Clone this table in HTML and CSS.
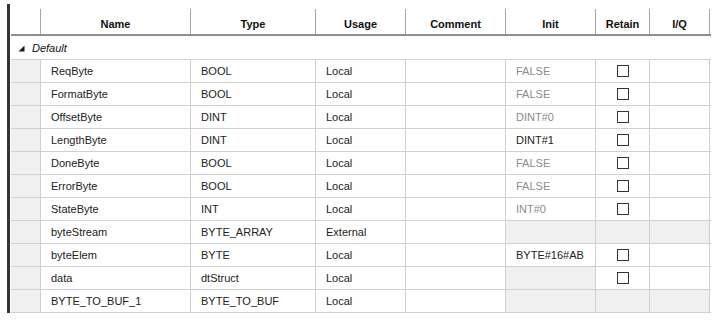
FILE: index.html
```html
<!DOCTYPE html>
<html>
<head>
<meta charset="utf-8">
<link rel="stylesheet" href="styles.css">
</head>
<body>
<div class="frame">
  <div class="grid">
    <div class="row head">
      <div class="c h"></div>
      <div class="c h">Name</div>
      <div class="c h">Type</div>
      <div class="c h">Usage</div>
      <div class="c h">Comment</div>
      <div class="c h">Init</div>
      <div class="c h">Retain</div>
      <div class="c h">I/Q</div>
    </div>
    <div class="group">
      <svg class="tri" width="7" height="7" viewBox="0 0 7 7"><polygon points="6.5,0.5 6.5,6.5 0.5,6.5" fill="#1a1a1a"/></svg>
      <span>Default</span>
    </div>
    <div class="row"><div class="c g"></div><div class="c">ReqByte</div><div class="c">BOOL</div><div class="c">Local</div><div class="c"></div><div class="c dim">FALSE</div><div class="c cb"><span class="box"></span></div><div class="c"></div></div>
    <div class="row"><div class="c g"></div><div class="c">FormatByte</div><div class="c">BOOL</div><div class="c">Local</div><div class="c"></div><div class="c dim">FALSE</div><div class="c cb"><span class="box"></span></div><div class="c"></div></div>
    <div class="row"><div class="c g"></div><div class="c">OffsetByte</div><div class="c">DINT</div><div class="c">Local</div><div class="c"></div><div class="c dim">DINT#0</div><div class="c cb"><span class="box"></span></div><div class="c"></div></div>
    <div class="row"><div class="c g"></div><div class="c">LengthByte</div><div class="c">DINT</div><div class="c">Local</div><div class="c"></div><div class="c">DINT#1</div><div class="c cb"><span class="box"></span></div><div class="c"></div></div>
    <div class="row"><div class="c g"></div><div class="c">DoneByte</div><div class="c">BOOL</div><div class="c">Local</div><div class="c"></div><div class="c dim">FALSE</div><div class="c cb"><span class="box"></span></div><div class="c"></div></div>
    <div class="row"><div class="c g"></div><div class="c">ErrorByte</div><div class="c">BOOL</div><div class="c">Local</div><div class="c"></div><div class="c dim">FALSE</div><div class="c cb"><span class="box"></span></div><div class="c"></div></div>
    <div class="row"><div class="c g"></div><div class="c">StateByte</div><div class="c">INT</div><div class="c">Local</div><div class="c"></div><div class="c dim">INT#0</div><div class="c cb"><span class="box"></span></div><div class="c"></div></div>
    <div class="row"><div class="c g"></div><div class="c">byteStream</div><div class="c">BYTE_ARRAY</div><div class="c">External</div><div class="c"></div><div class="c g"></div><div class="c g"></div><div class="c g"></div></div>
    <div class="row"><div class="c g"></div><div class="c">byteElem</div><div class="c">BYTE</div><div class="c">Local</div><div class="c"></div><div class="c">BYTE#16#AB</div><div class="c cb"><span class="box"></span></div><div class="c"></div></div>
    <div class="row"><div class="c g"></div><div class="c">data</div><div class="c">dtStruct</div><div class="c">Local</div><div class="c"></div><div class="c g"></div><div class="c cb"><span class="box"></span></div><div class="c"></div></div>
    <div class="row"><div class="c g"></div><div class="c">BYTE_TO_BUF_1</div><div class="c">BYTE_TO_BUF</div><div class="c">Local</div><div class="c"></div><div class="c g"></div><div class="c g"></div><div class="c g"></div></div>
  </div>
</div>
</body>
</html>
```

FILE: styles.css
```css
* { box-sizing: border-box; }
html, body { margin: 0; padding: 0; background: #fff; }
body {
  font-family: "Liberation Sans", Arial, sans-serif;
  font-size: 11px;
  color: #222;
  width: 721px;
  height: 320px;
  overflow: hidden;
}
.frame {
  margin: 4px 0 0 7px;
  width: 704px;
  height: 309px;
  border-left: 3px solid #333;
  padding-left: 1px;
}
.grid { width: 700px; }
.row {
  display: grid;
  grid-template-columns: 30px 150px 125px 90px 100px 90px 54px 60px;
  border-bottom: 1px solid #d0d0d0;
  height: 23px;
}
.c {
  border-right: 1px solid #d0d0d0;
  padding-left: 10px;
  display: flex;
  align-items: center;
  white-space: nowrap;
  line-height: 13px;
}
.row.head {
  height: 32px;
  padding-top: 5px;
  border-bottom: 2px solid #8f8f8f;
}
.c.h {
  border-right-color: #a6a6a6;
  justify-content: center;
  align-items: flex-end;
  padding: 0 0 3px 0;
  font-weight: bold;
  color: #111;
}
.c.h:first-child { border-right-color: #a6a6a6; }
.g { background: #f0f0f0; }
.dim { color: #8c8c8c; }
.cb { justify-content: center; padding-left: 0; }
.box {
  width: 12px;
  height: 12px;
  border: 1px solid #333;
  background: #fff;
}
.group {
  height: 24px;
  border-bottom: 1px solid #d0d0d0;
  display: flex;
  align-items: center;
  padding: 1px 0 0 7px;
  font-style: italic;
  color: #111;
}
.tri { margin-right: 7px; margin-top: 1px; }
```
